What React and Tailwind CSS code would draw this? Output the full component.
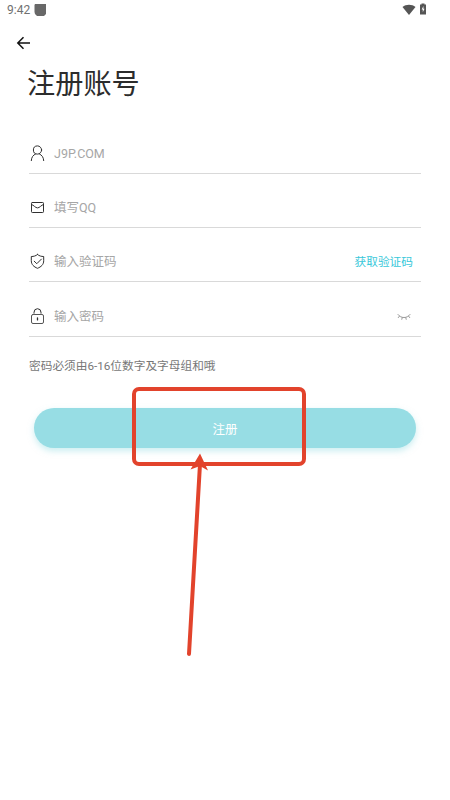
import React from "react";

const iconProps = {
  fill: "none",
  stroke: "#303030",
  strokeWidth: 1,
  strokeLinecap: "round",
  strokeLinejoin: "round",
};

function UserIcon() {
  return (
    <svg width="17" height="18" viewBox="0 0 17 18" {...iconProps}>
      <circle cx="8.5" cy="6" r="4.1" />
      <path d="M2.3 16.6c.2-3.6 1.9-5.5 4.2-6.6M14.7 16.6c-.2-3.6-1.9-5.5-4.2-6.6" />
    </svg>
  );
}

function MailIcon() {
  return (
    <svg width="17" height="18" viewBox="0 0 17 18" {...iconProps}>
      <rect x="2.5" y="4.5" width="12" height="10" rx=".8" />
      <path d="M2.7 6.5c2 .6 3.7 3.4 5.8 3.4s3.8-2.8 5.8-3.4" />
    </svg>
  );
}

function ShieldIcon() {
  return (
    <svg width="17" height="18" viewBox="0 0 17 18" {...iconProps}>
      <path d="M8.5 2.5c1.7 1.5 3.8 2 6.2 2v4.2c0 3.9-2.5 6.1-6.2 7.6-3.7-1.5-6.2-3.7-6.2-7.6V4.5c2.4 0 4.500-.5 6.200-2z" />
      <path d="M5.2 9.2l2.6 2.5 4.6-4.6" />
    </svg>
  );
}

function LockIcon() {
  return (
    <svg width="17" height="18" viewBox="0 0 17 18" {...iconProps}>
      <rect x="2.5" y="7.5" width="12" height="9" rx="1.5" stroke="#555" />
      <path d="M5 5.2a3.5 3.5 0 0 1 7 0" />
      <path d="M5 5.2v2M12 5.2v2" stroke="#777" />
      <path d="M8.5 10.9v2" strokeWidth="1.3" />
    </svg>
  );
}

function ClosedEyeIcon() {
  return (
    <svg width="14" height="8" viewBox="0 0 14 8" fill="none" stroke="#999" strokeWidth="1" strokeLinecap="round">
      <path d="M1 1.5c1.5 2 3.6 3 6 3s4.5-1 6-3M2.4 3.2L1.3 4.6M5.3 4.5L4.8 6.3M8.7 4.5l.5 1.8M11.6 3.2l1.1 1.4" />
    </svg>
  );
}

function Field({ icon, label, height, children }) {
  return (
    <div className={`${height} flex items-end border-b border-[#d9d9d9]`}>
      <div className="flex h-[41px] w-full items-center pr-2">
        {icon}
        <span className="ml-2 flex-1 pt-[3px] text-[12.5px] text-[#a6a6a6]">{label}</span>
        {children}
      </div>
    </div>
  );
}

export default function App() {
  return (
    <main className="relative h-[800px] w-[450px] overflow-hidden bg-white font-[Roboto,'Noto_Sans_CJK_SC',sans-serif]">
      <header className="flex h-5 items-center pl-[7px] pr-[22px] text-[12px] text-[#707070]">
        <span className="w-[27px] whitespace-nowrap">9:42</span>
        <svg className="-ml-px mr-auto" width="14" height="14" viewBox="0 0 14 14" fill="#686868">
          <path d="M2 1h11v10l-2 2H4l-2-2-.5-2V2z" />
        </svg>
        <svg className="-mt-px" width="14" height="12" viewBox="0 0 14 12" fill="#555">
          <path d="M.5 3C4 .1 10 .1 13.5 3L7 11z" />
        </svg>
        <svg className="-mt-[2px] ml-[3px] mr-px" width="8" height="12" viewBox="0 0 8 12">
          <path d="M2.5.5h3v1H7v10H1v-10h1.5z" fill="#555" />
          <path d="M4.4 3L2.7 6.6h1.1v2.7l1.7-3.6H4.4z" fill="#fff" />
        </svg>
      </header>

      <div className="flex h-[46px] items-center pl-[16px]">
        <svg width="15" height="14" viewBox="0 0 15 14" fill="none" stroke="#111" strokeWidth="1.5">
          <path d="M14 7H2M7.5 1.2L1.8 7l5.7 5.8" />
        </svg>
      </div>

      <h1 className="h-[54px] pl-[27px] pt-[2px] text-[28.2px] leading-[34px] text-[#2c2c2c]">注册账号</h1>

      <section className="ml-[29px] w-[392px]">
        <Field icon={<UserIcon />} label="J9P.COM" height="h-[54px]" />
        <Field icon={<MailIcon />} label="填写QQ" height="h-[54px]" />
        <Field icon={<ShieldIcon />} label="输入验证码" height="h-[54px]">
          <button className="pt-1 text-[11.7px] text-[#38c8da]">获取验证码</button>
        </Field>
        <Field icon={<LockIcon />} label="输入密码" height="h-[55px]">
          <span className="mr-[2px] mt-[2px]">
            <ClosedEyeIcon />
          </span>
        </Field>
      </section>

      <p className="mt-5 pl-[29px] text-[11.7px] leading-[18px] text-[#777]">密码必须由6-16位数字及字母组和哦</p>

      <button className="ml-[34px] mt-[33px] flex h-10 w-[382px] items-center justify-center rounded-full bg-[#97dde4] pt-1 text-[12.5px] text-white shadow-[0_3px_6px_#97dde480]">
        注册
      </button>

      <div className="absolute left-[132px] top-[387px] h-[79px] w-[174px] rounded-[7px] border-4 border-[#e2432c]" />
      <svg className="absolute left-[180px] top-[450px]" width="40" height="210" viewBox="0 0 40 210">
        <path d="M20 14L9 204" stroke="#e2432c" strokeWidth="4" strokeLinecap="round" />
        <path d="M20 3.5L28 20.5L20 16L10.5 19.5z" fill="#e2432c" />
      </svg>
    </main>
  );
}
